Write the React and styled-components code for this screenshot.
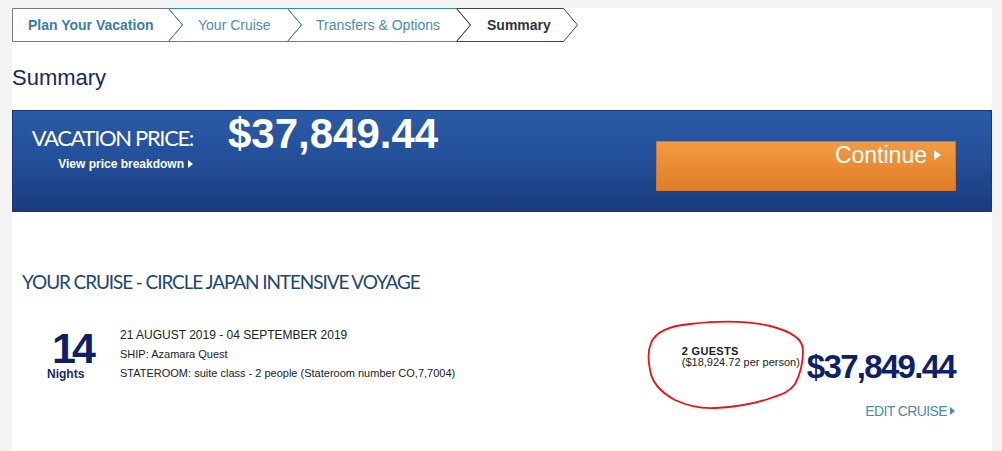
import React from "react";
import styled, { createGlobalStyle } from "styled-components";

const GlobalStyle = createGlobalStyle`
  html, body {
    margin: 0;
    padding: 0;
    background: #f3f3f3;
    font-family: "Liberation Sans", Arial, sans-serif;
  }
`;

const Page = styled.div`
  padding: 8px 10px 0 12px;
`;

const Panel = styled.div`
  position: relative;
  width: 980px;
  min-height: 443px;
  background: #fff;
`;

const Crumbs = styled.div`
  display: flex;
  height: 34px;
`;

const StepBox = styled.div`
  position: relative;
  flex: none;
  box-sizing: border-box;
  width: ${(p) => p.$w}px;
  height: 34px;
  margin-left: ${(p) => (p.$first ? 0 : -15)}px;
  padding-left: ${(p) => p.$pad}px;
  line-height: 34px;
  font-size: 14px;
  font-weight: ${(p) => (p.$bold ? 700 : 400)};
  color: ${(p) => p.$color};
  white-space: nowrap;

  svg {
    position: absolute;
    left: 0;
    top: 0;
    overflow: visible;
  }

  span {
    position: relative;
  }
`;

const Heading = styled.h1`
  margin: 23px 0 0;
  font-size: 22px;
  line-height: 26px;
  font-weight: 400;
  color: #142a5c;
`;

const Banner = styled.div`
  display: flex;
  align-items: flex-start;
  box-sizing: border-box;
  height: 102px;
  margin-top: 19px;
  padding: 0 35px 0 0;
  border: 1px solid #123680;
  background: linear-gradient(to bottom, #2b5ba6 0%, #24509a 45%, #1a3b7e 100%);
  color: #fff;
`;

const PriceLabel = styled.div`
  display: flex;
  flex-direction: column;
  align-items: flex-end;
  width: 180px;
  margin-top: 16px;
`;

const LabelText = styled.div`
  font-family: Lato, "Open Sans", sans-serif;
  font-size: 22px;
  line-height: 22px;
  letter-spacing: -1.35px;
`;

const BreakdownLink = styled.div`
  display: flex;
  align-items: center;
  gap: 4px;
  margin-top: 8px;
  font-size: 12px;
  font-weight: 700;
  line-height: 14px;
`;

const Caret = styled.span`
  display: inline-block;
  width: 0;
  height: 0;
  border-left: ${(p) => p.$size * 0.7}px solid currentColor;
  border-top: ${(p) => p.$size / 2}px solid transparent;
  border-bottom: ${(p) => p.$size / 2}px solid transparent;
`;

const BigPrice = styled.div`
  margin: 2px 0 0 35px;
  font-size: 42px;
  font-weight: 700;
  line-height: 42px;
`;

const ContinueButton = styled.button`
  display: flex;
  align-items: flex-start;
  justify-content: flex-end;
  gap: 7px;
  box-sizing: border-box;
  width: 300px;
  height: 50px;
  margin: 30px 0 0 auto;
  padding: 2px 14px 0 0;
  border: 1px solid #d27529;
  background: linear-gradient(to bottom, #f29b42 0%, #e17d27 100%);
  color: #fff;
  font-family: "Liberation Sans", Arial, sans-serif;
  font-size: 23px;
  line-height: 23px;
  cursor: pointer;

  ${Caret} {
    margin-top: 6px;
  }
`;

const Section = styled.div`
  padding: 60px 37px 0 10px;
`;

const SectionTitle = styled.h2`
  margin: 0;
  font-family: Lato, "Open Sans", sans-serif;
  font-size: 19px;
  line-height: 19px;
  font-weight: 400;
  color: #1c4776;
  letter-spacing: -1.1px;
`;

const CruiseRow = styled.div`
  display: flex;
  align-items: flex-start;
  margin-top: 35px;
  padding-left: 25px;
`;

const NightsBlock = styled.div`
  width: 73px;
  flex: none;
  color: #0f1f66;
`;

const NightsNumber = styled.div`
  margin: 4px 0 0 5px;
  font-size: 43px;
  font-weight: 700;
  line-height: 36px;
  letter-spacing: -4px;
`;

const NightsLabel = styled.div`
  margin-top: 2px;
  font-size: 12px;
  font-weight: 700;
  line-height: 13px;
  color: #1a2a6b;
`;

const Details = styled.div`
  color: #222;
  font-size: 11px;
  line-height: 19px;
`;

const DateLine = styled.div`
  font-size: 12px;
`;

const PriceColumn = styled.div`
  display: flex;
  flex-direction: column;
  align-items: flex-end;
  margin-left: auto;
  margin-top: 20px;
`;

const PriceRow = styled.div`
  display: flex;
  align-items: flex-start;
  gap: 7px;
`;

const Guests = styled.div`
  font-size: 11px;
  line-height: 10.5px;
  color: #222;
`;

const GuestCount = styled.div`
  font-weight: 700;
  letter-spacing: 0.3px;
`;

const CruisePrice = styled.div`
  margin-top: 4px;
  font-size: 33px;
  font-weight: 700;
  line-height: 33px;
  letter-spacing: -1.7px;
  color: #0e2168;
`;

const EditLink = styled.a`
  display: flex;
  align-items: center;
  gap: 3px;
  margin-top: 20px;
  font-size: 14px;
  line-height: 16px;
  letter-spacing: -0.6px;
  color: #4a8bae;
  text-decoration: none;
`;

const Scribble = styled.svg`
  position: absolute;
  left: 628px;
  top: 307px;
  pointer-events: none;
`;

const steps = [
  { label: "Plan Your Vacation", w: 171, pad: 16, color: "#3d7ea3", border: "#7a7a7a", bold: true },
  { label: "Your Cruise", w: 134, pad: 30, color: "#4b8db0", border: "#3c8bab" },
  { label: "Transfers & Options", w: 184, pad: 29, color: "#4b8db0", border: "#3c8bab" },
  { label: "Summary", w: 122, pad: 31, color: "#333", border: "#444", bold: true },
];

function Step({ label, w, pad, color, border, bold, first }) {
  const a = 14;
  const pts = first
    ? `0.5,0.5 ${w - a - 0.5},0.5 ${w - 0.5},17 ${w - a - 0.5},33.5 0.5,33.5`
    : `0.5,0.5 ${w - a - 0.5},0.5 ${w - 0.5},17 ${w - a - 0.5},33.5 0.5,33.5 ${a + 0.5},17`;
  return (
    <StepBox $w={w} $pad={pad} $color={color} $bold={bold} $first={first}>
      <svg width={w} height={34}>
        <polygon points={pts} fill="none" stroke={border} strokeWidth="1" />
      </svg>
      <span>{label}</span>
    </StepBox>
  );
}

export default function App() {
  return (
    <Page>
      <GlobalStyle />
      <Panel>
        <Crumbs>
          {steps.map((s, i) => (
            <Step key={s.label} {...s} first={i === 0} />
          ))}
        </Crumbs>

        <Heading>Summary</Heading>

        <Banner>
          <PriceLabel>
            <LabelText>VACATION PRICE:</LabelText>
            <BreakdownLink>
              View price breakdown <Caret $size={8} />
            </BreakdownLink>
          </PriceLabel>
          <BigPrice>$37,849.44</BigPrice>
          <ContinueButton>
            Continue <Caret $size={11} />
          </ContinueButton>
        </Banner>

        <Section>
          <SectionTitle>YOUR CRUISE - CIRCLE JAPAN INTENSIVE VOYAGE</SectionTitle>
          <CruiseRow>
            <NightsBlock>
              <NightsNumber>14</NightsNumber>
              <NightsLabel>Nights</NightsLabel>
            </NightsBlock>
            <Details>
              <DateLine>21 AUGUST 2019 - 04 SEPTEMBER 2019</DateLine>
              <div>SHIP: Azamara Quest</div>
              <div>STATEROOM: suite class - 2 people (Stateroom number CO,7,7004)</div>
            </Details>
            <PriceColumn>
              <PriceRow>
                <Guests>
                  <GuestCount>2 GUESTS</GuestCount>
                  <div>($18,924.72 per person)</div>
                </Guests>
                <CruisePrice>$37,849.44</CruisePrice>
              </PriceRow>
              <EditLink href="#">
                EDIT CRUISE <Caret $size={8} />
              </EditLink>
            </PriceColumn>
          </CruiseRow>
        </Section>

        <Scribble width="180" height="110" viewBox="640 315 180 110">
          <path
            d="M 651 343 C 655 333, 668 326, 690 324 C 715 321, 745 320, 770 326 C 790 331, 803 338, 803 350 C 803 362, 800 375, 795 384 C 788 394, 778 395, 768 399 C 750 405, 735 407, 716 408 C 700 409, 688 406, 675 400 C 662 393, 652 383, 650 370 C 648 360, 648 350, 651 343 Z"
            fill="none"
            stroke="#e8141c"
            strokeWidth="1.8"
            strokeLinejoin="round"
          />
        </Scribble>
      </Panel>
    </Page>
  );
}
